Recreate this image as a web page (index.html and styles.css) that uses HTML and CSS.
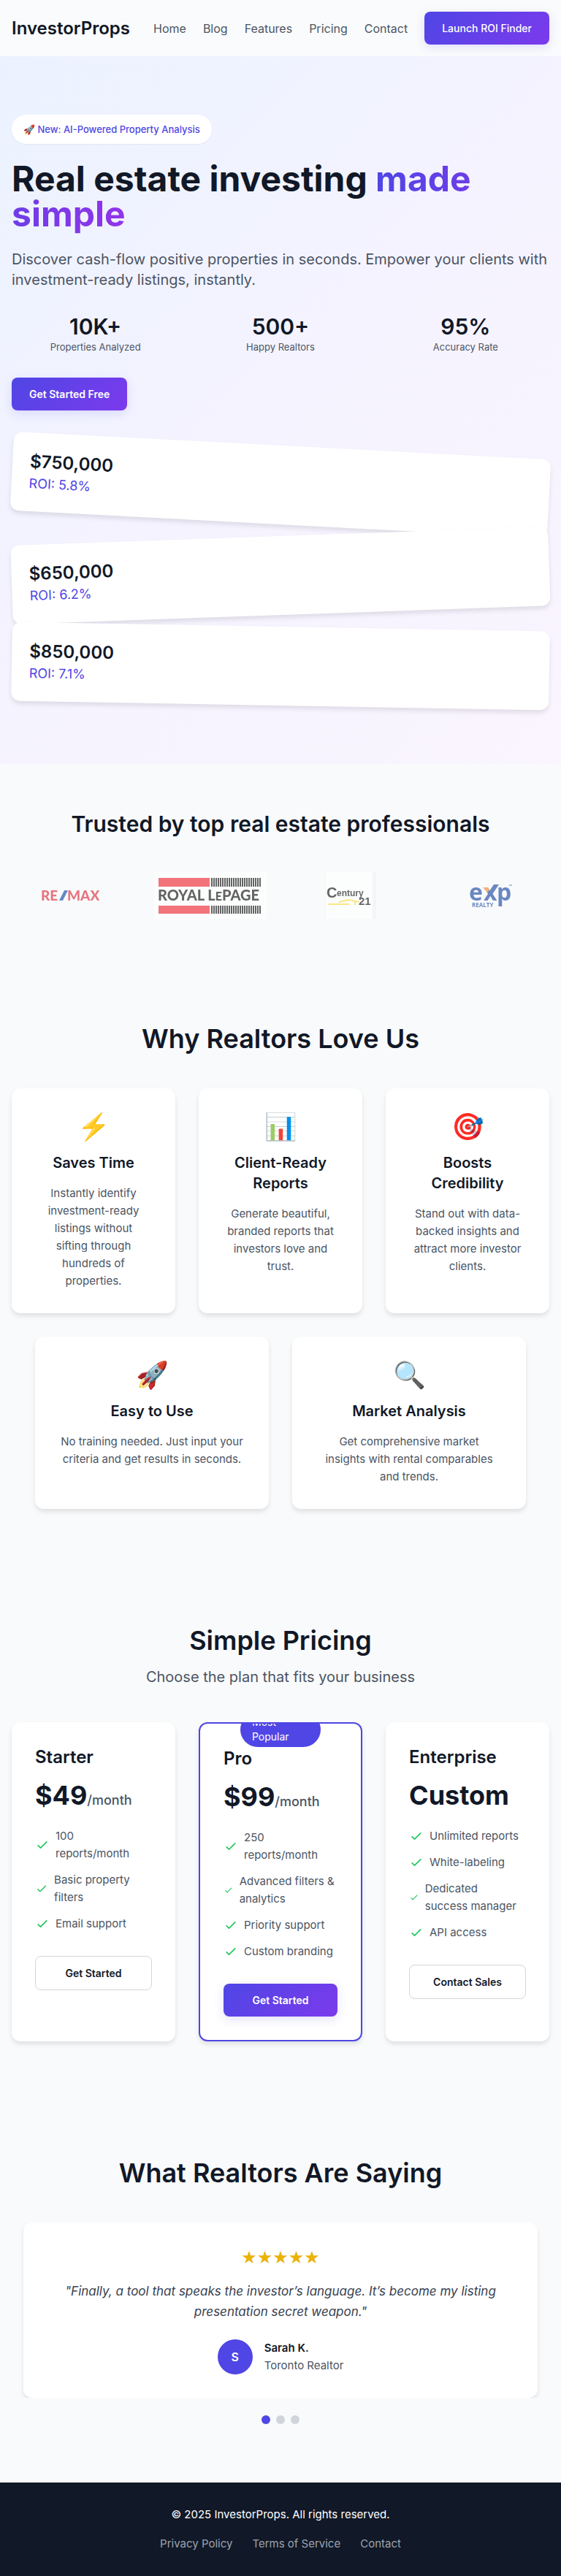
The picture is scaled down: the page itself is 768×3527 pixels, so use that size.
FILE: index.html
```html
<!DOCTYPE html>
<html lang="en">
<head>
<meta charset="utf-8">
<meta name="viewport" content="width=device-width, initial-scale=1">
<title>InvestorProps</title>
<link rel="stylesheet" href="styles.css">
</head>
<body>
<header class="header">
  <a class="brand" href="#">InvestorProps</a>
  <nav class="nav">
    <a href="#">Home</a>
    <a href="#">Blog</a>
    <a href="#features">Features</a>
    <a href="#pricing">Pricing</a>
    <a href="#contact">Contact</a>
    <button class="btn btn-primary" type="button">Launch ROI Finder</button>
  </nav>
</header>

<main>
<section class="hero">
  <span class="hero-badge">🚀 New: AI-Powered Property Analysis</span>
  <h1 class="hero-title">Real estate investing <span class="gradient-text">made simple</span></h1>
  <p class="hero-text">Discover cash-flow positive properties in seconds. Empower your clients with investment-ready listings, instantly.</p>
  <div class="stats">
    <div><p class="stat-value">10K+</p><p class="stat-label">Properties Analyzed</p></div>
    <div><p class="stat-value">500+</p><p class="stat-label">Happy Realtors</p></div>
    <div><p class="stat-value">95%</p><p class="stat-label">Accuracy Rate</p></div>
  </div>
  <button class="btn btn-primary" type="button">Get Started Free</button>
  <div class="listings">
    <div class="listing tilt-a"><p class="listing-price">$750,000</p><p class="listing-roi">ROI: 5.8%</p></div>
    <div class="listing tilt-b"><p class="listing-price">$650,000</p><p class="listing-roi">ROI: 6.2%</p></div>
    <div class="listing tilt-c"><p class="listing-price">$850,000</p><p class="listing-roi">ROI: 7.1%</p></div>
  </div>
</section>

<section class="trusted">
  <h2 class="trusted-title">Trusted by top real estate professionals</h2>
  <div class="logos">
    <svg width="80" height="64" viewBox="0 0 80 64" role="img" aria-label="RE/MAX">
      <g font-family="Lato" font-weight="900" font-size="19" fill="#dc1c2e">
        <text x="0" y="39">RE</text>
        <text x="36" y="39">MAX</text>
      </g>
      <path d="M25 39L32 25h5l-7 14z" fill="#003da5"/>
    </svg>
    <svg width="154" height="64" viewBox="0 0 154 64" role="img" aria-label="Royal LePage">
      <defs>
        <pattern id="bars" width="3" height="12" patternUnits="userSpaceOnUse"><path d="M0 0h2v12H0z" fill="#000"/></pattern>
      </defs>
      <path d="M0 0h154v64H0z" fill="#fff"/>
      <path d="M6 8h70v12H6zM6 46h70v11H6z" fill="#ee1c25"/>
      <path d="M78 8h69v12H78zM78 46h69v11H78z" fill="url(#bars)"/>
      <text x="5" y="39" font-family="Lato" font-weight="900" font-size="20">ROYAL L<tspan font-size="16">E</tspan>PAGE</text>
    </svg>
    <svg width="70" height="64" viewBox="0 0 70 64" role="img" aria-label="Century 21">
      <path d="M0 0h70v64H0z" fill="#f1f3f3"/>
      <path d="M1 0h64v64H1z" fill="#fff"/>
      <g font-family="Liberation Sans" font-weight="700">
        <text x="2" y="35" font-size="20">C</text>
        <text x="16" y="33" font-size="12">entury</text>
        <text x="46" y="45" font-size="15">21</text>
      </g>
      <path d="M4 44h29M19 41l14-3 13 3M41 41v4" fill="none" stroke="#fbdc32" stroke-width="2"/>
    </svg>
    <svg width="60" height="64" viewBox="0 0 60 64" role="img" aria-label="eXp Realty">
      <g font-family="Open Sans" font-weight="700" fill="#0c3c9c">
        <text x="0" y="39" font-size="32">e</text>
        <text x="20" y="39" font-size="32">x</text>
        <text x="38" y="39" font-size="32">p</text>
        <text x="4" y="48" font-size="8">REALTY</text>
      </g>
      <path d="M32 30l-4-4 6-9h7z" fill="#0c3c9c"/>
      <path d="M19 21h7l2 3-3 4z" fill="#f58220"/>
      <path d="M55 18h4" stroke="#0c3c9c"/>
    </svg>
  </div>
</section>

<section class="section" id="features">
  <h2 class="section-title">Why Realtors Love Us</h2>
  <div class="cards">
    <article class="card feature"><div class="feature-icon">⚡</div><h3>Saves Time</h3><p>Instantly identify investment-ready listings without<br>sifting through<br>hundreds of<br>properties.</p></article>
    <article class="card feature"><div class="feature-icon">📊</div><h3>Client-Ready Reports</h3><p>Generate beautiful, branded reports that investors love and trust.</p></article>
    <article class="card feature"><div class="feature-icon">🎯</div><h3>Boosts Credibility</h3><p>Stand out with data-backed insights and attract more investor clients.</p></article>
  </div>
  <div class="cards cards-pair">
    <article class="card feature"><div class="feature-icon">🚀</div><h3>Easy to Use</h3><p>No training needed. Just input your criteria and get results in seconds.</p></article>
    <article class="card feature"><div class="feature-icon">🔍</div><h3>Market Analysis</h3><p>Get comprehensive market<br>insights with rental comparables<br>and trends.</p></article>
  </div>
</section>

<svg class="sprite" aria-hidden="true"><symbol id="check" viewBox="0 0 24 24"><path d="M5 13l4 4L19 7" fill="none" stroke="currentColor" stroke-width="2" stroke-linecap="round" stroke-linejoin="round"/></symbol></svg>

<section class="section" id="pricing">
  <h2 class="section-title with-sub">Simple Pricing</h2>
  <p class="section-sub">Choose the plan that fits your business</p>
  <div class="cards">
    <article class="card plan">
      <h3>Starter</h3>
      <p class="price">$49<span>/month</span></p>
      <ul>
        <li><svg class="check"><use href="#check"/></svg><span>100<br>reports/month</span></li>
        <li><svg class="check"><use href="#check"/></svg>Basic property filters</li>
        <li><svg class="check"><use href="#check"/></svg>Email support</li>
      </ul>
      <button class="btn btn-outline" type="button">Get Started</button>
    </article>
    <article class="card plan plan-popular">
      <span class="popular">Most Popular</span>
      <h3>Pro</h3>
      <p class="price">$99<span>/month</span></p>
      <ul>
        <li><svg class="check"><use href="#check"/></svg><span>250<br>reports/month</span></li>
        <li><svg class="check"><use href="#check"/></svg>Advanced filters &amp; analytics</li>
        <li><svg class="check"><use href="#check"/></svg>Priority support</li>
        <li><svg class="check"><use href="#check"/></svg>Custom branding</li>
      </ul>
      <button class="btn btn-primary" type="button">Get Started</button>
    </article>
    <article class="card plan">
      <h3>Enterprise</h3>
      <p class="price">Custom</p>
      <ul>
        <li><svg class="check"><use href="#check"/></svg>Unlimited reports</li>
        <li><svg class="check"><use href="#check"/></svg>White-labeling</li>
        <li><svg class="check"><use href="#check"/></svg>Dedicated success&nbsp;manager</li>
        <li><svg class="check"><use href="#check"/></svg>API access</li>
      </ul>
      <button class="btn btn-outline" type="button">Contact Sales</button>
    </article>
  </div>
</section>

<section class="section">
  <h2 class="section-title">What Realtors Are Saying</h2>
  <div class="carousel">
    <figure class="card testimonial">
      <div class="stars" role="img" aria-label="5 stars">★★★★★</div>
      <blockquote>"Finally, a tool that speaks the investor’s language. It’s become my listing<br>presentation secret weapon."</blockquote>
      <figcaption class="author">
        <span class="avatar">S</span>
        <span class="author-text"><strong>Sarah K.</strong><span>Toronto Realtor</span></span>
      </figcaption>
    </figure>
  </div>
  <div class="dots">
    <button class="dot active" type="button" aria-label="Testimonial 1"></button>
    <button class="dot" type="button" aria-label="Testimonial 2"></button>
    <button class="dot" type="button" aria-label="Testimonial 3"></button>
  </div>
</section>
</main>

<footer class="footer" id="contact">
  <p>© 2025 InvestorProps. All rights reserved.</p>
  <nav class="footer-links">
    <a href="#">Privacy Policy</a>
    <a href="#">Terms of Service</a>
    <a href="#">Contact</a>
  </nav>
</footer>
</body>
</html>
```
FILE: styles.css
```css
*, *::before, *::after { box-sizing: border-box; }
body, h1, h2, h3, p, ul, figure, blockquote { margin: 0; }
body {
  background: #f9fafb;
  color: #111827;
  font-family: Inter, "Noto Sans", sans-serif;
  font-size: 16px;
  line-height: 24px;
}
a { color: inherit; text-decoration: none; }
ul { padding: 0; list-style: none; }
.sprite { display: none; }

.header {
  display: flex;
  align-items: center;
  justify-content: space-between;
  padding: 16px;
  background: #fafbfc;
}
.brand { font-size: 24px; font-weight: 600; }
.nav { display: flex; align-items: center; gap: 23px; color: #4b5563; font-size: 16px; }

.btn {
  padding: 12px 24px;
  border: 0;
  border-radius: 8px;
  font: 600 14px/21px Inter, sans-serif;
  cursor: pointer;
}
.nav .btn { font-weight: 500; }
.btn-primary {
  background: linear-gradient(135deg, #4f46e5, #7c3aed);
  box-shadow: 0 4px 14px rgba(79, 70, 229, 0.15);
  color: #fff;
}
.btn-outline { border: 1px solid #d1d5db; background: #fff; color: #111827; }

.hero {
  padding: 80px 16px;
  background: linear-gradient(135deg, #ebf2ff, #f5f3ff 50%, #faf5ff);
}
.hero-badge {
  display: block;
  width: fit-content;
  padding: 8px 16px;
  border-radius: 20px;
  background: #fff;
  box-shadow: 0 1px 2px rgba(0, 0, 0, 0.05);
  color: #4f46e5;
  font-size: 13px;
  font-weight: 500;
}
.hero-title { margin-top: 24px; font-size: 48px; line-height: 48px; font-weight: 700; }
.gradient-text {
  background: linear-gradient(90deg, #4f46e5, #9333ea);
  -webkit-background-clip: text;
  background-clip: text;
  color: transparent;
}
.hero-text { margin-top: 24px; color: #4b5563; font-size: 20px; line-height: 28px; }
.stats {
  display: grid;
  grid-template-columns: repeat(3, 1fr);
  gap: 24px;
  margin: 32px 0;
  text-align: center;
}
.stat-value { font-size: 30px; line-height: 36px; font-weight: 600; }
.stat-label { color: #4b5563; font-size: 13px; line-height: 20px; }

.listings { display: grid; gap: 16px; margin-top: 48px; }
.listing {
  padding: 24px;
  border-radius: 12px;
  background: #fff;
  box-shadow: 0 4px 6px rgba(0, 0, 0, 0.1);
}
.tilt-a { transform: rotate(3deg); }
.tilt-b { transform: rotate(-2deg); }
.tilt-c { transform: rotate(1deg); }
.listing-price { font-size: 24px; line-height: 32px; font-weight: 600; }
.listing-roi { color: #4f46e5; font-size: 18px; line-height: 28px; }

.trusted { padding: 64px 16px; }
.trusted-title { margin-bottom: 48px; font-size: 30px; line-height: 36px; font-weight: 600; text-align: center; }
.logos {
  display: grid;
  grid-template-columns: repeat(4, 1fr);
  gap: 32px;
  justify-items: center;
  opacity: 0.6;
}

.section { padding: 80px 16px; }
.section-title { margin-bottom: 48px; font-size: 36px; line-height: 40px; font-weight: 600; text-align: center; }
.with-sub { margin-bottom: 16px; }
.section-sub { margin-bottom: 48px; color: #4b5563; font-size: 20px; line-height: 28px; text-align: center; }

.cards { display: grid; grid-template-columns: repeat(3, 1fr); gap: 32px; }
.cards-pair { grid-template-columns: repeat(2, 1fr); max-width: 672px; margin: 32px auto 0; }
.card {
  padding: 32px;
  border-radius: 12px;
  background: #fff;
  box-shadow: 0 4px 6px rgba(0, 0, 0, 0.1);
}
.feature { text-align: center; }
.feature-icon { margin-bottom: 16px; font-size: 36px; line-height: 40px; }
.feature h3 { margin-bottom: 16px; font-size: 20px; line-height: 28px; font-weight: 600; }
.feature p { color: #4b5563; font-size: 15px; }

.plan h3 { margin-bottom: 16px; font-size: 24px; line-height: 32px; font-weight: 600; }
.price { margin-bottom: 24px; font-size: 36px; line-height: 40px; font-weight: 700; }
.price span { color: #4b5563; font-size: 18px; line-height: 18px; font-weight: 500; }
.plan ul { display: grid; gap: 12px; margin-bottom: 32px; color: #4b5563; font-size: 15px; }
.plan li { display: flex; align-items: center; }
.check { width: 20px; height: 20px; margin-right: 8px; color: #22c55e; }
.plan .btn { width: 100%; }
.plan-popular { position: relative; overflow: hidden; border: 2px solid #4f46e5; }
.popular {
  position: absolute;
  top: -16px;
  left: 50%;
  transform: translateX(-50%);
  padding: 4px 16px;
  border-radius: 24px;
  background: #4f46e5;
  color: #fff;
  font-size: 14px;
  line-height: 20px;
}

.carousel { overflow: hidden; padding: 0 16px; }
.testimonial { text-align: center; }
.stars { margin-bottom: 16px; color: #eab308; font-family: "DejaVu Sans", sans-serif; font-size: 24px; line-height: 32px; }
.testimonial blockquote { margin-bottom: 24px; color: #374151; font-size: 17px; line-height: 28px; font-style: italic; }
.author { display: flex; align-items: center; justify-content: center; gap: 16px; text-align: left; }
.avatar {
  display: flex;
  align-items: center;
  justify-content: center;
  width: 48px;
  height: 48px;
  border-radius: 50%;
  background: #4f46e5;
  color: #fff;
  font-weight: 600;
}
.author-text { display: grid; color: #4b5563; font-size: 15px; }
.author-text strong { color: #111827; font-weight: 600; }
.dots { display: flex; justify-content: center; gap: 8px; margin-top: 24px; }
.dot { width: 12px; height: 12px; padding: 0; border: 0; border-radius: 50%; background: #d1d5db; }
.dot.active { background: #4f46e5; }

.footer { padding: 32px 16px; background: #111827; color: #fff; text-align: center; font-size: 15px; }
.footer-links { display: flex; justify-content: center; gap: 27px; margin-top: 16px; color: #9ca3af; }
```
